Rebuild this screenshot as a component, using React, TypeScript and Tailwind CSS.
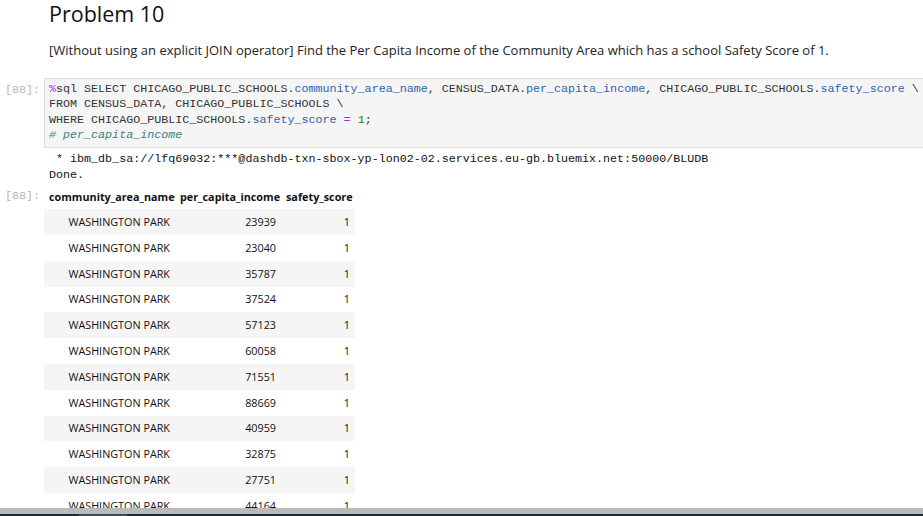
import React from "react";

const rows = [
  "23939",
  "23040",
  "35787",
  "37524",
  "57123",
  "60058",
  "71551",
  "88669",
  "40959",
  "32875",
  "27751",
  "44164",
];

const mono = "font-['Liberation_Mono',monospace]";
const sans = "font-['Open_Sans',sans-serif]";

const Prompt = () => (
  <div className={`w-[44px] shrink-0 pl-[5px] text-[11.7px] leading-[15.3px] text-[#b5b5b5] ${mono}`}>
    [88]:
  </div>
);

const App = () => {
  return (
    <div className="h-[516px] w-[923px] flex flex-col bg-white overflow-hidden">
      <div className="flex-1 overflow-hidden">
        <div className="pl-[49px]">
          <h1 className={`text-[21.5px] leading-[27px] text-[#111] ${sans}`}>Problem 10</h1>
          <p className={`mt-[14px] text-[13px] leading-[18px] text-[#222] ${sans}`}>
            [Without using an explicit JOIN operator] Find the Per Capita Income of the Community Area which has a
            school Safety Score of 1.
          </p>
        </div>

        <div className="flex mt-[14px] pt-[5px]">
          <div className="pt-[5px]">
            <Prompt />
          </div>
          <div className="flex-1">
            <div
              className={`border border-r-0 border-[#e0e0e0] bg-[#f5f5f5] pl-[4px] pt-[3px] pb-[4px] text-[11.7px] leading-[15.3px] text-[#333] whitespace-pre ${mono}`}
            >
              <div>
                <span className="text-[#aa22ff]">%</span>sql SELECT CHICAGO_PUBLIC_SCHOOLS.
                <span className="text-[#2a64b0]">community_area_name</span>, CENSUS_DATA.
                <span className="text-[#2a64b0]">per_capita_income</span>, CHICAGO_PUBLIC_SCHOOLS.
                <span className="text-[#2a64b0]">safety_score</span> \
              </div>
              <div>FROM CENSUS_DATA, CHICAGO_PUBLIC_SCHOOLS \</div>
              <div>
                WHERE CHICAGO_PUBLIC_SCHOOLS.<span className="text-[#2a64b0]">safety_score</span>{" "}
                <span className="text-[#aa22ff]">=</span> <span className="text-[#008800]">1</span>;
              </div>
              <div className="italic text-[#408080]"># per_capita_income</div>
            </div>
            <div className={`pl-[5px] pt-[4px] text-[11.7px] leading-[15.5px] text-[#111] whitespace-pre ${mono}`}>
              <div> * ibm_db_sa://lfq69032:***@dashdb-txn-sbox-yp-lon02-02.services.eu-gb.bluemix.net:50000/BLUDB</div>
              <div>Done.</div>
            </div>
          </div>
        </div>

        <div className="flex mt-[1px]">
          <div className="pt-[5px]">
            <Prompt />
          </div>
          <div className={`text-[10.8px] text-[#111] ${sans}`}>
            <div className="flex h-[25px] items-center font-bold">
              <div className="w-[131px] px-[5px] text-right">community_area_name</div>
              <div className="w-[106px] px-[5px] text-right">per_capita_income</div>
              <div className="w-[74px] px-[5px] text-right">safety_score</div>
            </div>
            {rows.map((income, i) => (
              <div
                key={i}
                className={`flex h-[25.8px] items-center ${i % 2 === 0 ? "bg-[#f5f5f5]" : "bg-white"}`}
              >
                <div className="w-[131px] px-[5px] text-right">WASHINGTON PARK</div>
                <div className="w-[106px] px-[5px] text-right">{income}</div>
                <div className="w-[74px] px-[5px] text-right">1</div>
              </div>
            ))}
          </div>
        </div>
      </div>

      <div className="h-[6px] shrink-0 bg-[#bababa]" />
      <div className="h-[2px] shrink-0 bg-[#1e2b35] flex">
        <div className="ml-[79px] w-[48px] bg-[#3e4b55]" />
      </div>
    </div>
  );
};

export default App;
